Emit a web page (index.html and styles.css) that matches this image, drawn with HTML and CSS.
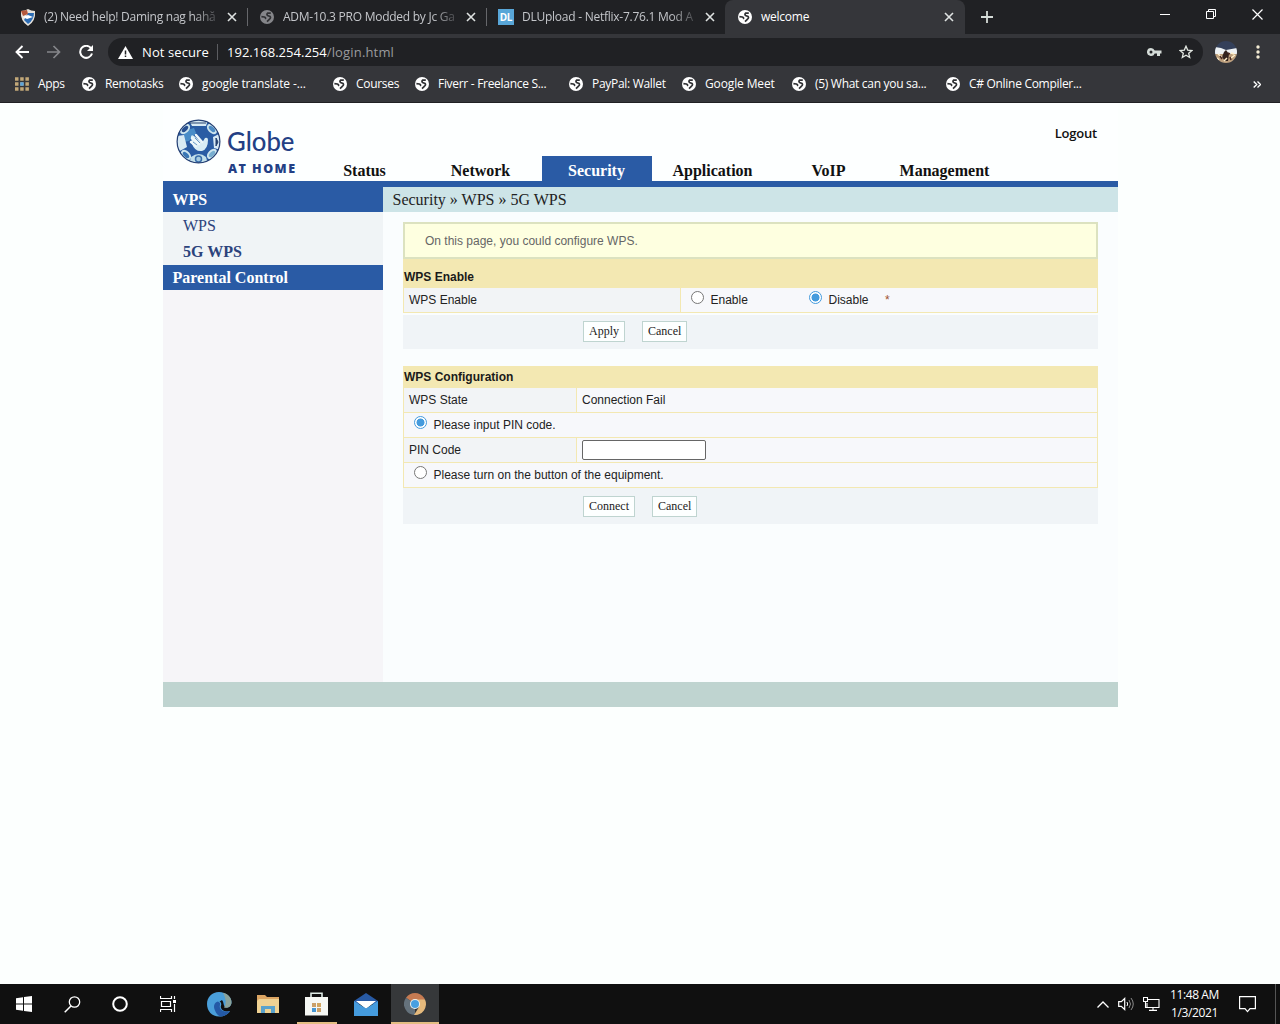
FILE: index.html
```html
<!DOCTYPE html>
<html lang="en">
<head>
    <meta charset="UTF-8">
    <meta name="viewport" content="width=device-width, initial-scale=1.0">
    <title>welcome</title>
    <link rel="stylesheet" href="styles.css">
</head>
<body>
    <!-- shared icons -->
    <svg class="defs" width="0" height="0">
        <symbol id="world" viewBox="0 0 14 14">
            <circle cx="7" cy="7" r="7" fill="currentColor"/>
            <path d="M10.800 3.200L7.800 3Q6.200 4.300 7.600 5.500L10 6.400Q11.300 8 9.300 9.300L7 11.700M1.400 6.700L4.300 7Q6.300 7.800 5.200 9" fill="none" stroke="#303134" stroke-width="1.700"/>
        </symbol>
        <symbol id="close" viewBox="0 0 10 10">
            <path d="M1 1l8 8M9 1L1 9" fill="none" stroke="currentColor" stroke-width="1.600"/>
        </symbol>
    </svg>

    <div class="browser">
        <div class="tabs">
            <div class="tab tab-1">
                <svg class="fav" width="16" height="17" viewBox="0 0 16 17"><path d="M1 2q4 0 7-2 3 2 7 2 1 10-7 15Q0 12 1 2z" fill="#e8e4dc"/><path d="M8 4h6q0 7-6 11l-4-4z" fill="#2c6cb4"/><path d="M1 2l6-1 1 4-5 2z" fill="#b4583c"/><path d="M3 8l5-2 5 2-6 2z" fill="#fff"/></svg>
                <span class="tab-title fade">(2) Need help! Daming nag hahă</span>
                <svg class="x" width="10" height="10"><use href="#close"/></svg>
            </div>
            <div class="tab tab-2">
                <svg class="fav dim" width="14" height="14"><use href="#world"/></svg>
                <span class="tab-title fade">ADM-10.3 PRO Modded by Jc Ga</span>
                <svg class="x" width="10" height="10"><use href="#close"/></svg>
            </div>
            <div class="tab tab-3">
                <span class="fav dl">DL</span>
                <span class="tab-title fade">DLUpload - Netflix-7.76.1 Mod A</span>
                <svg class="x" width="10" height="10"><use href="#close"/></svg>
            </div>
            <div class="tab tab-4 active">
                <svg class="fav" width="14" height="14"><use href="#world"/></svg>
                <span class="tab-title">welcome</span>
                <svg class="x" width="10" height="10"><use href="#close"/></svg>
            </div>
            <svg class="plus" width="12" height="12" viewBox="0 0 12 12"><path d="M6 0v12M0 6h12" stroke="#d5dcd8" stroke-width="1.800"/></svg>
            <div class="win-btns">
                <svg width="10" height="10" viewBox="0 0 10 10"><path d="M0 5.500h10" stroke="#fff"/></svg>
                <svg width="10" height="10" viewBox="0 0 10 10"><path d="M.5 2.500h7v7h-7zM2.500 2.500v-2h7v7h-2" fill="none" stroke="#fff"/></svg>
                <svg width="11" height="11" viewBox="0 0 11 11"><path d="M.5.5l10 10M10.500.5l-10 10" stroke="#fff" stroke-width="1.200"/></svg>
            </div>
        </div>

        <div class="toolbar">
            <svg width="14" height="14" viewBox="0 0 14 14"><path d="M14 7H1.500M7.500 1l-6 6 6 6" fill="none" stroke="#fff" stroke-width="1.900"/></svg>
            <svg width="14" height="14" viewBox="0 0 14 14"><path d="M0 7h12.500M6.500 1l6 6-6 6" fill="none" stroke="#85868a" stroke-width="1.700"/></svg>
            <svg width="14" height="14" viewBox="0 0 14 14"><path d="M12 3.200A6 6 0 1 0 13 8.500" fill="none" stroke="#fff" stroke-width="2"/><path d="M14 0v6H8z" fill="#fff"/></svg>
            <div class="address">
                <svg width="15" height="13" viewBox="0 0 15 13"><path d="M7.500 0L15 13H0z" fill="#fff"/><path d="M7.500 4.500v4M7.500 9.500v1.500" stroke="#202124" stroke-width="1.500"/></svg>
                <span class="not-secure">Not secure</span>
                <span class="url">192.168.254.254<span>/login.html</span></span>
                <svg class="key" width="15" height="9" viewBox="0 0 15 9"><path d="M4 0a4 4 0 1 0 3.700 5.500H10V8h3V5.500h1.500v-3H7.700A4 4 0 0 0 4 0zm0 2.500a1.500 1.500 0 1 1 0 3 1.500 1.500 0 0 1 0-3z" fill="#d5dcd8"/></svg>
                <svg class="star" width="14" height="14" viewBox="0 0 14 14"><path d="M7 1.200l1.700 3.900 4.200.4-3.200 2.800 1 4.200L7 10.300l-3.700 2.200 1-4.200L1.100 5.500l4.200-.4z" fill="none" stroke="#e3e8e2" stroke-width="1.300"/></svg>
            </div>
            <svg class="avatar" width="22" height="22" viewBox="0 0 22 22">
                <clipPath id="av"><circle cx="11" cy="11" r="11"/></clipPath>
                <g clip-path="url(#av)"><path d="M0 0h22v22H0z" fill="#34405a"/><path d="M0 6l6 1 5 2 11-2v6H0z" fill="#eef2f4"/><path d="M0 13h22v9H0z" fill="#bd9f7c"/><path d="M9 11l2-2 3 4-1 7h-3l-3-4z" fill="#33231f"/><path d="M3 13l4 3M16 17l4-3M9 20l3-3M2 17l2 2M16 12l3 1" stroke="#fff0cc" stroke-width="1.500"/><path d="M5 15l2 3M15 16l1 3M13 12l2 1" stroke="#4d2c24" stroke-width="1.500"/></g>
            </svg>
            <svg class="dots" width="4" height="14" viewBox="0 0 4 14"><g fill="#f4ecd4"><circle cx="2" cy="2" r="1.700"/><circle cx="2" cy="7" r="1.700"/><circle cx="2" cy="12" r="1.700"/></g></svg>
        </div>

        <div class="bookmarks">
            <div class="bm"><svg width="14" height="14" viewBox="0 0 14 14"><path d="M0 2h14M0 7h14M0 12h14" stroke="#c2a878" stroke-width="3.500" stroke-dasharray="3.500 1.700"/><path d="M5.200 7h3.500" stroke="#5ca4dc" stroke-width="3.500"/></svg><span>Apps</span></div>
            <div class="bm"><svg width="14" height="14"><use href="#world"/></svg><span>Remotasks</span></div>
            <div class="bm loose"><svg width="14" height="14"><use href="#world"/></svg><span>google translate -...</span></div>
            <div class="bm"><svg width="14" height="14"><use href="#world"/></svg><span>Courses</span></div>
            <div class="bm"><svg width="14" height="14"><use href="#world"/></svg><span>Fiverr - Freelance S...</span></div>
            <div class="bm"><svg width="14" height="14"><use href="#world"/></svg><span>PayPal: Wallet</span></div>
            <div class="bm loose"><svg width="14" height="14"><use href="#world"/></svg><span>Google Meet</span></div>
            <div class="bm"><svg width="14" height="14"><use href="#world"/></svg><span>(5) What can you sa...</span></div>
            <div class="bm"><svg width="14" height="14"><use href="#world"/></svg><span>C# Online Compiler...</span></div>
            <svg class="more" width="8" height="7" viewBox="0 0 8 7"><path d="M.7.5l3 3-3 3M4.500.5l3 3-3 3" fill="none" stroke="#fff" stroke-width="1.400"/></svg>
        </div>
    </div>

    <div class="page">
        <div class="header">
            <svg class="logo" width="125" height="60" viewBox="0 0 125 60">
                <clipPath id="ball"><circle cx="22.500" cy="22.500" r="21.500"/></clipPath>
                <g clip-path="url(#ball)">
                    <path d="M0 0h45v45H0z" fill="#2a5ca4"/>
                    <path d="M8 12l10-3 2 5-7 8-6 1z" fill="#488cc8"/>
                    <path d="M13 1h19l-2 6H16zM0 17l8-1 3 12-9 5zM45 14l-8 4 1 11 7 2z" fill="#d8eaf4"/>
                    <ellipse cx="9" cy="10" rx="5" ry="3" transform="rotate(-45 9 10)" fill="#264f91" stroke="#cce4ee" stroke-width="2"/>
                    <ellipse cx="36" cy="10" rx="5" ry="3" transform="rotate(45 36 10)" fill="#4c8bc4" stroke="#cce4ee" stroke-width="2"/>
                    <ellipse cx="10" cy="36" rx="5" ry="3" transform="rotate(45 10 36)" fill="#3976b5" stroke="#cce4ee" stroke-width="2"/>
                    <ellipse cx="36" cy="35" rx="5" ry="3" transform="rotate(-45 36 35)" fill="#78aed0" stroke="#cce4ee" stroke-width="2"/>
                    <path d="M15 38q8-6 15 0l2 7H13z" fill="#c2dfea"/>
                    <circle cx="22.500" cy="40" r="3" fill="#a6cbe0" stroke="#3a6eaa" stroke-width="1.500"/>
                    <path d="M40 19v8l2-4zM14 4h16" fill="#24406e" stroke="#24406e"/>
                    <path d="M15 18q0-3 3-1l8 7 3-5q3-1 3 2 0 9-6 11-7 1-10-7z" fill="#d8ecf4"/>
                    <path d="M15 23l5 4M16 19l7 6M20 16l6 7" stroke="#edf7fa" stroke-width="2.500" stroke-linecap="round"/>
                    <path d="M17 23l4 3M19 19l5 5" stroke="#4c83b8" stroke-width=".8"/>
                </g>
                <circle cx="22.500" cy="22.500" r="21.400" fill="none" stroke="#254074" stroke-width="1.200"/>
                <text class="logo-name" x="51" y="32" textLength="67.500" lengthAdjust="spacingAndGlyphs">Globe</text>
                <text class="logo-sub" x="52" y="53.500" textLength="67">AT HOME</text>
            </svg>
            <div class="header-main">
                <a class="logout">Logout</a>
                <div class="nav">
                    <a>Status</a>
                    <a>Network</a>
                    <a class="current">Security</a>
                    <a>Application</a>
                    <a>VoIP</a>
                    <a>Management</a>
                </div>
            </div>
        </div>

        <div class="main">
            <div class="sidebar">
                <div class="side-head">WPS</div>
                <div class="side-items">
                    <a>WPS</a>
                    <a class="current">5G WPS</a>
                </div>
                <div class="side-head">Parental Control</div>
            </div>

            <div class="content">
                <div class="crumbs">Security » WPS » 5G WPS</div>
                <div class="panel">
                    <div class="notice">On this page, you could configure WPS.</div>
                    <div class="title first">WPS Enable</div>
                    <div class="row wide">
                        <div class="label">WPS Enable</div>
                        <div class="value radios">
                            <label><input type="radio" name="wps"><span>Enable</span></label>
                            <label><input type="radio" name="wps" checked><span>Disable</span></label>
                            <span class="star-mark">*</span>
                        </div>
                    </div>
                    <div class="buttons">
                        <button>Apply</button>
                        <button>Cancel</button>
                    </div>

                    <div class="title second">WPS Configuration</div>
                    <div class="row">
                        <div class="label">WPS State</div>
                        <div class="value">Connection Fail</div>
                    </div>
                    <div class="row full">
                        <label><input type="radio" name="mode" checked><span>Please input PIN code.</span></label>
                    </div>
                    <div class="row">
                        <div class="label">PIN Code</div>
                        <div class="value"><input class="pin" type="text"></div>
                    </div>
                    <div class="row full">
                        <label><input type="radio" name="mode"><span>Please turn on the button of the equipment.</span></label>
                    </div>
                    <div class="buttons last">
                        <button>Connect</button>
                        <button>Cancel</button>
                    </div>
                </div>
            </div>
        </div>
        <div class="footer"></div>
    </div>

    <div class="taskbar">
        <div class="task"><svg width="16" height="16" viewBox="0 0 16 16"><path d="M0 2.200L7 1.200v6.300H0zM8 1l8-1v7.500H8zM0 8.500h7v6.300l-7-1zM8 8.500h8V16l-8-1z" fill="#fff"/></svg></div>
        <div class="task"><svg width="17" height="17" viewBox="0 0 17 17"><circle cx="10.500" cy="6" r="5.200" fill="none" stroke="#fff" stroke-width="1.300"/><path d="M7 10L.7 16.300" stroke="#fff" stroke-width="1.500"/></svg></div>
        <div class="task"><svg width="16" height="16" viewBox="0 0 16 16"><circle cx="8" cy="8" r="6.800" fill="none" stroke="#fff" stroke-width="2"/></svg></div>
        <div class="task"><svg width="17" height="16" viewBox="0 0 17 16"><path d="M.5 0v2.500h11V0M.5 16v-2.500h11V16M1.500 5.500h9v5h-9zM14.500 0v3M14.500 8v8" fill="none" stroke="#fff" stroke-width="1.200"/><path d="M13 4h3v3h-3z" fill="#fff"/></svg></div>
        <div class="task app"><svg width="25" height="25" viewBox="0 0 25 25"><path d="M12 0C5 0 0 5 0 12s5 12.500 12 12.500c5 0 9-2 11-5.500-4 1-8 0-9-3-1-2 1-3 0-5-1-3-5-2-5 1l6-4c2 2 1 5 3 7 2 1.500 6 0 6.500-4C25 5 19 0 12 0z" fill="#4a9fda"/><path d="M16 .8c5 1.200 8.500 5 8.500 9.200 0 5-4 6.500-7.500 5.500q4-5-1-14.700z" fill="#8aa39c"/><path d="M11 9.500c-4 1-5 5-3 9 1 3 3 5 5 6 4 0 8-2 10-5.500-5 1.500-9 0-10-3-.8-2 .5-3 0-5z" fill="#2459a6"/></svg></div>
        <div class="task app"><svg width="22" height="19" viewBox="0 0 22 19"><path d="M0 0h8l2 2h12v16H0z" fill="#dca563"/><path d="M2 4h20v14H0V6z" fill="#efd293"/><path d="M4 18v-7h14v7h-4v-4H8v4z" fill="#59a2cc"/></svg></div>
        <div class="task app open"><svg width="23" height="25" viewBox="0 0 23 25"><path d="M6 6V1.200h11V6" fill="none" stroke="#e0ece6" stroke-width="1.600"/><path d="M0 5h23v18.500H0z" fill="#f6f8f4"/><path d="M7 11h4v4H7zM12 16h4v4h-4z" fill="#caa068"/><path d="M12 11h4v4h-4z" fill="#d2a661"/><path d="M7 16h4v4H7z" fill="#4797d4"/></svg></div>
        <div class="task app"><svg width="24" height="23" viewBox="0 0 24 23"><path d="M0 8l12-8 12 8v3H0z" fill="#285aa4"/><path d="M2 8h20l-10 8z" fill="#fff"/><path d="M0 8l12 7.500L24 8v15H0z" fill="#459bdd"/></svg></div>
        <div class="task app open chrome"><svg width="22" height="22" viewBox="0 0 22 22"><path d="M11 11L2 4.700A11 11 0 0 1 20 4.700L21 6.500z" fill="#c67b52"/><path d="M11 11L2 4.700A11 11 0 0 0 11 22z" fill="#65727c"/><path d="M11 6.500h10A11 11 0 0 1 10 22l5-8z" fill="#e4b97c"/><circle cx="11" cy="11" r="5" fill="#eef2ee"/><circle cx="11" cy="11" r="4" fill="#479fe0"/></svg></div>
        <div class="tray">
            <svg width="12" height="7" viewBox="0 0 12 7"><path d="M.5 6.500L6 1l5.500 5.500" fill="none" stroke="#fff" stroke-width="1.300"/></svg>
            <svg width="17" height="14" viewBox="0 0 17 14"><path d="M.7 4.700h2.600L6.700 1.500v11L3.300 9.300H.7z" fill="none" stroke="#fff" stroke-width="1.200"/><path d="M9 5q1.300 2 0 4" fill="none" stroke="#fff"/><path d="M11 3q3 4 0 8M13 1q4.500 6 0 12" fill="none" stroke="#8c8c8c"/></svg>
            <svg width="17" height="14" viewBox="0 0 17 14"><path d="M5 2.500h11v8H4V6M.5.500h4v4h-4zM2.500 5v5.500H4M10 10.500v3M6 13.400h8" fill="none" stroke="#fff" stroke-width="1.100"/></svg>
            <div class="clock">11:48 AM<br>1/3/2021</div>
            <svg width="17" height="17" viewBox="0 0 17 17"><path d="M.6.6h15.800v12h-5.400l-2.500 3-2.500-3H.6z" fill="none" stroke="#fff" stroke-width="1.200"/></svg>
            <span class="desktop"></span>
        </div>
    </div>
</body>
</html>
```

FILE: styles.css
```css
* {
    box-sizing: border-box;
}
body {
    margin: 0;
    height: 1024px;
    display: flex;
    flex-direction: column;
    background: #fcfffe;
    font-family: "Liberation Sans", Arial, sans-serif;
    font-size: 12px;
    color: #222;
    overflow: hidden;
}
svg {
    display: block;
    flex: none;
}
.defs {
    position: absolute;
}

/* browser window */
.browser {
    height: 103px;
    background: #35363a;
    border-bottom: 1px solid #202124;
    font-family: "Open Sans", "Noto Sans", sans-serif;
    color: #fff;
}
.tabs {
    height: 34px;
    background: #202124;
    display: flex;
    align-items: center;
}
.tab {
    height: 34px;
    display: flex;
    align-items: center;
    color: #c4c6ca;
    letter-spacing: -0.25px;
}
.tab-1 {
    width: 248px;
    padding-left: 20px;
}
.tab-2 {
    width: 239px;
    padding-left: 12px;
}
.tab-3 {
    width: 238px;
    padding-left: 11px;
}
.tab-4 {
    width: 240px;
    padding-left: 13px;
}
.tab-1, .tab-2 {
    background: linear-gradient(#66676b, #66676b) right 8px / 1px 18px no-repeat;
}
.tab.active {
    background: #35363a;
    border-radius: 8px 8px 0 0;
    color: #fff;
}
.fav {
    margin-right: 8px;
}
.dim {
    color: #85868a;
    margin-right: 9px;
}
.active .fav {
    margin-right: 9px;
}
.dl {
    width: 16px;
    height: 16px;
    background: #58a6d8;
    color: #fff;
    font-size: 10px;
    font-weight: bold;
    line-height: 16px;
    text-align: center;
}
.tab-title {
    flex: 1;
    margin-top: -1px;
    white-space: nowrap;
}
.fade {
    -webkit-mask-image: linear-gradient(to right, #000 85%, rgba(0, 0, 0, 0.15));
    mask-image: linear-gradient(to right, #000 85%, rgba(0, 0, 0, 0.15));
}
.x {
    margin: 0 11px 0 8px;
    color: #dfe3e2;
}
.tab-3 .x {
    margin-right: 10px;
}
.plus {
    margin-left: 16px;
}
.win-btns {
    display: flex;
    gap: 36px;
    margin: -6px 17px 0 auto;
}
.toolbar {
    height: 36px;
    padding: 0 20px 0 15px;
    display: flex;
    align-items: center;
    gap: 18px;
}
.address {
    width: 1095px;
    height: 28px;
    padding: 0 10px;
    border-radius: 14px;
    background: #202124;
    display: flex;
    align-items: center;
    font-size: 13px;
}
.toolbar .address {
    margin-left: -3px;
}
.not-secure {
    width: 76px;
    margin-left: 9px;
    border-right: 1px solid #5c5d61;
    line-height: 16px;
    white-space: nowrap;
    letter-spacing: 0.1px;
}
.url {
    margin-left: 9px;
    letter-spacing: 0.02px;
}
.url span {
    color: #9a9b9e;
    letter-spacing: 0.16px;
}
.key {
    margin-left: auto;
}
.star {
    margin-left: 17px;
}
.toolbar .avatar {
    margin-left: -6px;
}
.toolbar .dots {
    margin-left: 1px;
}
.bookmarks {
    height: 28px;
    padding: 0 19px 0 15px;
    display: grid;
    grid-template-columns: 67px 97px 154px 82px 154px 113px 110px 154px 1fr 8px;
    align-items: center;
}
.bm {
    display: flex;
    align-items: center;
    gap: 9px;
    white-space: nowrap;
    letter-spacing: -0.3px;
}
.bm span {
    margin-top: -1px;
}
.loose {
    letter-spacing: -0.13px;
}

/* router page */
.page {
    width: 955px;
    margin-left: 163px;
    flex: 1;
}
.header {
    height: 84px;
    display: flex;
    background: #fdffff;
    border-bottom: 6px solid #2a5ba5;
}
.logo {
    margin: 16px 0 0 13px;
}
.logo-name {
    font: 500 26px Lato, sans-serif;
    fill: #233f85;
}
.logo-sub {
    font: 800 12.5px "Open Sans", sans-serif;
    fill: #233f85;
}
.header-main {
    margin-left: 8.5px;
    flex: 1;
    display: flex;
    flex-direction: column;
    justify-content: space-between;
}
.logout {
    margin: 22px 21px 0 auto;
    font: 600 13px/17px "Open Sans", sans-serif;
    letter-spacing: -0.2px;
    color: #111;
}
.nav {
    display: flex;
    gap: 6px;
    font: bold 16px/25px "Liberation Serif", serif;
    color: #111;
}
.nav a {
    width: 110px;
    height: 25px;
    padding-top: 2px;
    text-align: center;
}
.nav .current {
    margin: 0 -0.5px 0 0.5px;
    padding-right: 1px;
    background: #2a5ba5;
    color: #fff;
}
.main {
    height: 495px;
    display: flex;
}
.sidebar {
    width: 220px;
    background: #f6f5f8;
    font: 16px/25px "Liberation Serif", serif;
}
.side-head {
    height: 25px;
    padding-left: 9.5px;
    background: #2a5ba5;
    color: #fff;
    font-weight: bold;
}
.side-items {
    height: 53px;
    padding: 1px 0 0 20px;
    background: #f0f4f6;
    color: #2c437c;
}
.side-items a {
    display: block;
    height: 26px;
}
.side-items .current {
    font-weight: bold;
}
.content {
    width: 735px;
    background: #fafdfe;
}
.crumbs {
    height: 25px;
    padding-left: 9.5px;
    background: #cde4e7;
    font: 16px/26px "Liberation Serif", serif;
}
.panel {
    width: 695px;
    margin: 10px 0 0 20px;
}
.notice {
    height: 37px;
    padding-left: 20px;
    border: 2px solid #dce2c0;
    background: #feffe0;
    line-height: 34px;
    color: #666;
}
.title {
    background: #f3e8b2;
    font-weight: bold;
    padding-left: 1px;
    color: #1a1a1a;
}
.title.first {
    height: 29px;
    line-height: 36px;
}
.title.second {
    height: 22px;
    margin-top: 17px;
    line-height: 22px;
}
.row {
    height: 25px;
    display: flex;
    border: 1px solid #f3e8b2;
    border-top: none;
    background: #f7f8fb;
    line-height: 24px;
}
.label {
    width: 173px;
    padding-left: 5px;
    border-right: 1px solid #f3e8b2;
    background: #f2f4f6;
}
.wide .label {
    width: 277px;
}
.value {
    padding-left: 5px;
    display: flex;
    align-items: center;
}
.row label {
    display: flex;
}
input[type="radio"] {
    appearance: none;
    width: 13px;
    height: 13px;
    margin: 3px 6.5px 0 0;
    border: 1px solid #777;
    border-radius: 50%;
    background: #fff;
}
input[type="radio"]:checked {
    border-color: #459bdd;
    background: radial-gradient(circle, #459bdd 3.7px, #fff 4.3px);
}
.radios {
    padding-left: 10px;
}
.radios label {
    width: 118px;
}
.radios label + label {
    width: 76px;
}
.star-mark {
    color: #a0522d;
}
.full {
    padding-left: 10px;
}
.pin {
    width: 124px;
    height: 20px;
    border: 1px solid #666;
    border-radius: 2px;
    background: #fff;
}
.buttons {
    height: 34px;
    margin-top: 2px;
    padding: 6px 0 0 180px;
    display: flex;
    gap: 17px;
    background: #f0f4f7;
}
.buttons.last {
    height: 36px;
    margin-top: 0;
    padding-top: 8px;
}
button {
    height: 21px;
    padding: 0 5px;
    border: 1px solid #bfd4d0;
    background: #fdffff;
    font: 12px "Liberation Serif", serif;
    color: #222;
}
.footer {
    height: 25px;
    background: #bfd4d0;
}

/* taskbar */
.taskbar {
    height: 40px;
    background: #101010;
    display: flex;
    color: #fff;
}
.task {
    width: 48px;
    height: 40px;
    display: flex;
    align-items: center;
    justify-content: center;
}
.app {
    width: 49px;
}
.task:nth-child(5) {
    margin-left: 3px;
    width: 48px;
}
.open {
    background: linear-gradient(#e3bd82, #e3bd82) center bottom / 40px 2px no-repeat;
}
.chrome {
    width: 48px;
    margin-left: 1px;
    background: linear-gradient(#e3bd82, #e3bd82) center bottom / 48px 2px no-repeat #36383a;
}
.tray {
    margin-left: auto;
    display: flex;
    align-items: center;
}
.tray svg + svg {
    margin-left: 9px;
}
.tray svg:nth-child(3) {
    margin-left: 8px;
}
.clock {
    width: 69px;
    text-align: center;
    font: 12px/18px "Open Sans", sans-serif;
    letter-spacing: -0.4px;
}
.clock + svg {
    margin-left: 10px;
}
.desktop {
    width: 1px;
    height: 40px;
    margin: 0 4px 0 19px;
    background: #555;
}
```
